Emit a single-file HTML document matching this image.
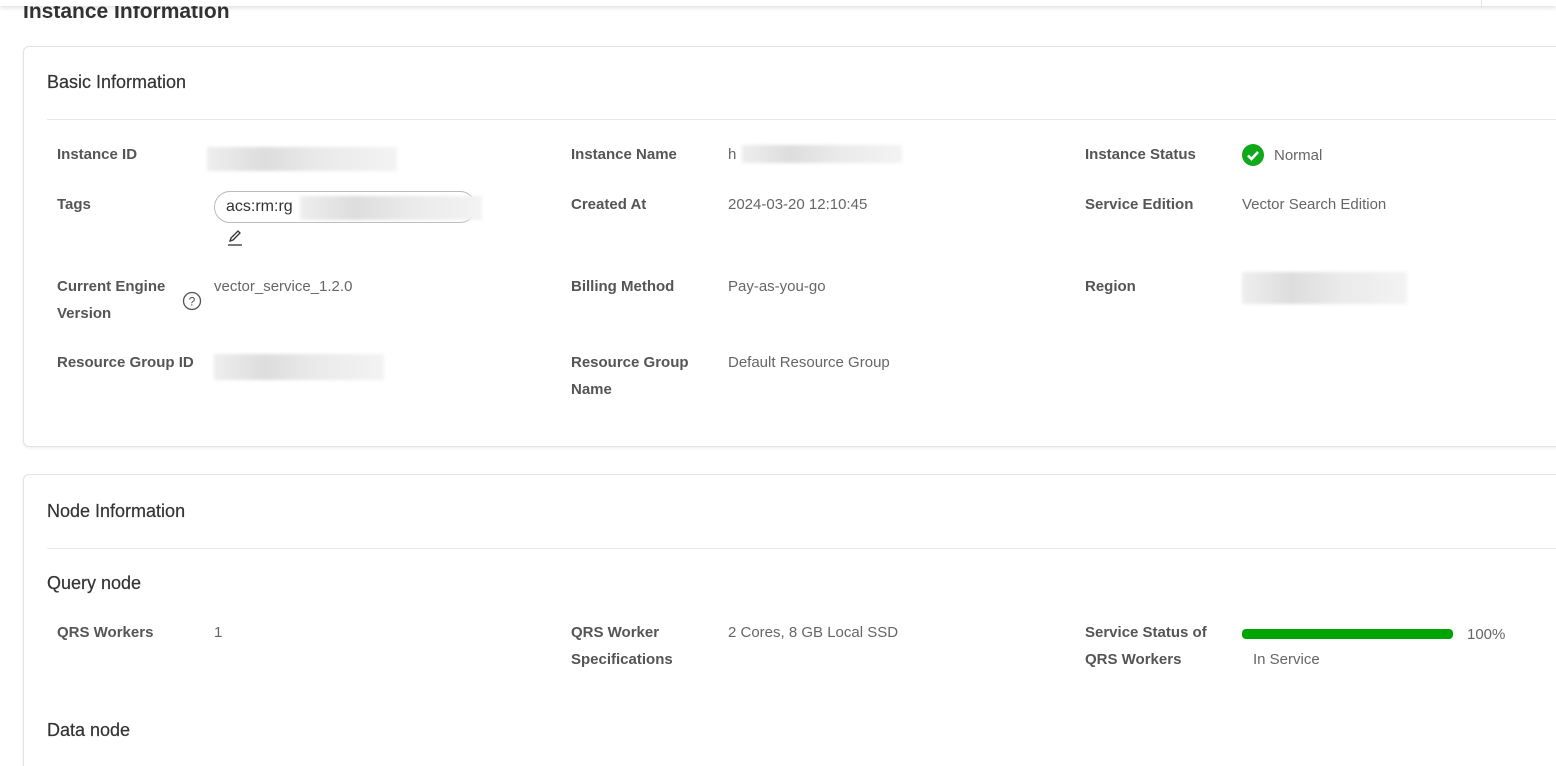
<!DOCTYPE html>
<html><head><meta charset="utf-8"><style>
*{box-sizing:border-box;margin:0;padding:0}
html,body{width:1556px;height:766px;overflow:hidden}
body{background:#fff;font-family:"Liberation Sans",Arial,sans-serif;position:relative}
.top{position:absolute;left:0;top:0;width:1556px;height:6px;background:#fff;box-shadow:0 2px 4px rgba(0,0,0,.12);z-index:3}
.vl{position:absolute;left:1481px;top:0;width:1px;height:8px;background:#e5e5e5;z-index:4}
h1{position:absolute;left:23px;top:0px;font-size:21px;font-weight:bold;color:#333}
.card{position:absolute;left:23px;width:1560px;border:1px solid #e3e3e3;border-radius:6px;box-shadow:0 1px 3px rgba(0,0,0,.08);background:#fff}
.ct{position:absolute;left:23px;font-size:18px;color:#333;-webkit-text-stroke:0.2px #333}
.hr{position:absolute;left:23px;right:0;height:1px;background:#e8e8e8}
.t{position:absolute;font-size:15px;line-height:27px}
.l{color:#555;font-weight:bold}
.v{color:#666}
.blur{position:absolute;height:16px;background:linear-gradient(90deg,#eee,#ddd 30%,#eaeaea 60%,#f3f3f3);filter:blur(1.5px)}
</style></head><body>
<div class="top"></div><div class="vl"></div>
<h1>Instance Information</h1>
<div class="card" style="top:46px;height:401px">
 <div class="ct" style="top:25px">Basic Information</div>
 <div class="hr" style="top:72px"></div>
</div>
<div class="card" style="top:474px;height:310px">
 <div class="ct" style="top:26px">Node Information</div>
 <div class="hr" style="top:73px"></div>
 <div class="ct" style="top:98px">Query node</div>
 <div class="ct" style="top:245px">Data node</div>
</div>
<div class="t l" style="left:57px;top:141px">Instance ID</div>
<div class="blur" style="left:207px;top:147px;width:190px;height:24px"></div>
<div class="t l" style="left:571px;top:141px">Instance Name</div>
<div class="t v" style="left:728px;top:141px">h</div>
<div class="blur" style="left:742px;top:145px;width:160px;height:18px"></div>
<div class="t l" style="left:1085px;top:141px">Instance Status</div>
<svg style="position:absolute;left:1242px;top:144px" width="22" height="22"><circle cx="11" cy="11" r="11" fill="#11a81c"/><path d="M6 11.5l3.5 3.5 6.5-7" stroke="#fff" stroke-width="2.6" fill="none"/></svg>
<div class="t v" style="left:1274px;top:142px">Normal</div>

<div class="t l" style="left:57px;top:191px">Tags</div>
<div style="position:absolute;left:214px;top:191px;width:262px;height:32px;border:1px solid #bbb;border-radius:16px;font-size:16px;line-height:30px;padding-left:11px;color:#333">acs:rm:rg</div>
<div class="blur" style="left:300px;top:196px;width:182px;height:24px"></div>
<svg style="position:absolute;left:226px;top:228px" width="18" height="18"><path d="M4 13l1-3 7-7 2 2-7 7z" stroke="#333" stroke-width="1.3" fill="none"/><path d="M2 17h14" stroke="#333" stroke-width="1.3"/></svg>
<div class="t l" style="left:571px;top:191px">Created At</div>
<div class="t v" style="left:728px;top:191px">2024-03-20 12:10:45</div>
<div class="t l" style="left:1085px;top:191px">Service Edition</div>
<div class="t v" style="left:1242px;top:191px">Vector Search Edition</div>

<div class="t l" style="left:57px;top:273px">Current Engine<br>Version</div>
<svg style="position:absolute;left:182px;top:291px" width="20" height="20"><circle cx="10" cy="10" r="8.5" stroke="#555" stroke-width="1.3" fill="none"/><text x="10" y="14.5" font-size="12" text-anchor="middle" fill="#555" font-family="Liberation Sans">?</text></svg>
<div class="t v" style="left:214px;top:273px">vector_service_1.2.0</div>
<div class="t l" style="left:571px;top:273px">Billing Method</div>
<div class="t v" style="left:728px;top:273px">Pay-as-you-go</div>
<div class="t l" style="left:1085px;top:273px">Region</div>
<div class="blur" style="left:1242px;top:272px;width:165px;height:32px"></div>

<div class="t l" style="left:57px;top:349px">Resource Group ID</div>
<div class="blur" style="left:214px;top:354px;width:170px;height:26px"></div>
<div class="t l" style="left:571px;top:349px">Resource Group<br>Name</div>
<div class="t v" style="left:728px;top:349px">Default Resource Group</div>

<div class="t l" style="left:57px;top:619px">QRS Workers</div>
<div class="t v" style="left:214px;top:619px">1</div>
<div class="t l" style="left:571px;top:619px">QRS Worker<br>Specifications</div>
<div class="t v" style="left:728px;top:619px">2 Cores, 8 GB Local SSD</div>
<div class="t l" style="left:1085px;top:619px">Service Status of<br>QRS Workers</div>
<div style="position:absolute;left:1242px;top:629px;width:211px;height:10px;background:#00a400;border-radius:4px"></div>
<div class="t v" style="left:1467px;top:621px">100%</div>
<div class="t v" style="left:1253px;top:646px">In Service</div>
</body></html>
